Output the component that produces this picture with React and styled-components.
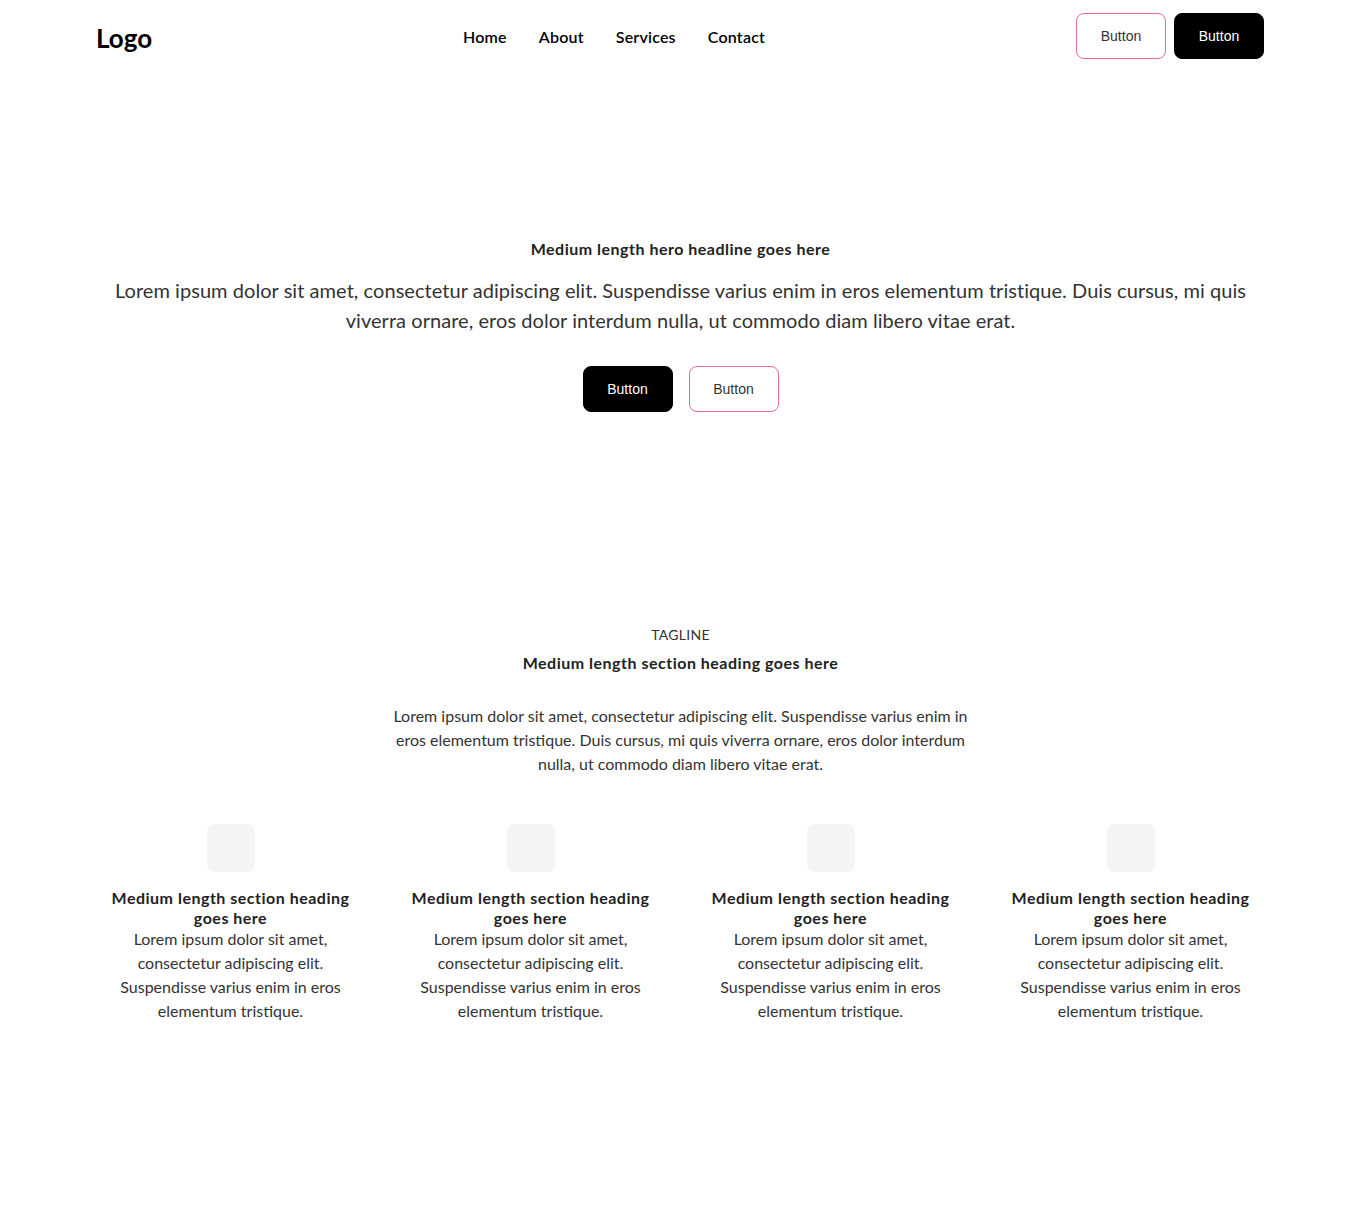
import React from "react";
import styled, { createGlobalStyle } from "styled-components";

const GlobalStyle = createGlobalStyle`
  * {
    box-sizing: border-box;
  }
  body {
    margin: 0;
    background: #fff;
    color: #222;
    font-family: Lato, "Noto Sans", sans-serif;
  }
`;

const features = [1, 2, 3, 4];

const App = () => {
  return (
    <>
      <GlobalStyle />
      <Header>
        <Logo>Logo</Logo>
        <Nav>
          <NavLink href="#">Home</NavLink>
          <NavLink href="#">About</NavLink>
          <NavLink href="#">Services</NavLink>
          <NavLink href="#">Contact</NavLink>
        </Nav>
        <ButtonGroup $gap={8}>
          <Button $variant="outline">Button</Button>
          <Button>Button</Button>
        </ButtonGroup>
      </Header>

      <Hero>
        <HeroTitle>Medium length hero headline goes here</HeroTitle>
        <HeroText>
          Lorem ipsum dolor sit amet, consectetur adipiscing elit. Suspendisse
          varius enim in eros elementum tristique. Duis cursus, mi quis viverra
          ornare, eros dolor interdum nulla, ut commodo diam libero vitae erat.
        </HeroText>
        <ButtonGroup $gap={16} $center>
          <Button>Button</Button>
          <Button $variant="outline">Button</Button>
        </ButtonGroup>
      </Hero>

      <Features>
        <Tagline>TAGLINE</Tagline>
        <SectionTitle>Medium length section heading goes here</SectionTitle>
        <SectionText>
          Lorem ipsum dolor sit amet, consectetur adipiscing elit. Suspendisse
          varius enim in eros elementum tristique. Duis cursus, mi quis viverra
          ornare, eros dolor interdum nulla, ut commodo diam libero vitae erat.
        </SectionText>
        <FeatureGrid>
          {features.map((n) => (
            <FeatureCard key={n}>
              <IconBox />
              <FeatureTitle>Medium length section heading goes here</FeatureTitle>
              <FeatureText>
                Lorem ipsum dolor sit amet, consectetur adipiscing elit.
                Suspendisse varius enim in eros elementum tristique.
              </FeatureText>
            </FeatureCard>
          ))}
        </FeatureGrid>
      </Features>
    </>
  );
};

const Header = styled.header`
  height: 72px;
  padding: 0 97px 0 96px;
  display: flex;
  align-items: center;
  justify-content: space-between;
`;

const Logo = styled.div`
  font-size: 26px;
  font-weight: 700;
  color: #000;
  padding-top: 3px;
`;

const Nav = styled.nav`
  display: flex;
  gap: 32px;
`;

const NavLink = styled.a`
  font-size: 16px;
  font-weight: 600;
  letter-spacing: 0.2px;
  color: #000;
  text-decoration: none;
`;

const ButtonGroup = styled.div`
  display: flex;
  gap: ${(p) => p.$gap}px;
  justify-content: ${(p) => (p.$center ? "center" : "flex-end")};
`;

const Button = styled.button`
  width: 90px;
  height: 46px;
  border-radius: 8px;
  font-family: "Liberation Sans", Arial, sans-serif;
  font-size: 14px;
  cursor: pointer;
  border: 1px solid ${(p) => (p.$variant === "outline" ? "#ec6a9c" : "#000")};
  background: ${(p) => (p.$variant === "outline" ? "#fff" : "#000")};
  color: ${(p) => (p.$variant === "outline" ? "#333" : "#fff")};
`;

const Hero = styled.section`
  padding: 165px 96px 0;
  text-align: center;
`;

const HeroTitle = styled.h1`
  margin: 0 0 14px;
  font-size: 16px;
  line-height: 24px;
  font-weight: 700;
  letter-spacing: 0.5px;
  color: #222;
`;

const HeroText = styled.p`
  margin: 0 0 31px;
  font-size: 20px;
  line-height: 30px;
  letter-spacing: 0.05px;
  color: #333;
`;

const Features = styled.section`
  max-width: 1200px;
  margin: 0 auto;
  padding: 212px 0 200px;
  text-align: center;
`;

const Tagline = styled.div`
  font-size: 14px;
  line-height: 21px;
  color: #333;
  letter-spacing: 0.3px;
`;

const SectionTitle = styled.h2`
  margin: 6px 0 29px;
  font-size: 16px;
  line-height: 24px;
  font-weight: 700;
  letter-spacing: 0.5px;
  color: #222;
`;

const SectionText = styled.p`
  max-width: 600px;
  margin: 0 auto 48px;
  font-size: 16px;
  line-height: 24px;
  color: #333;
`;

const FeatureGrid = styled.div`
  display: grid;
  grid-template-columns: repeat(4, 1fr);
`;

const FeatureCard = styled.div`
  display: flex;
  flex-direction: column;
  align-items: center;
  padding: 0 28px;
`;

const IconBox = styled.div`
  width: 48px;
  height: 48px;
  border-radius: 8px;
  background: #f3f4f6;
  margin-bottom: 16px;
`;

const FeatureTitle = styled.h3`
  margin: 0;
  font-size: 16px;
  line-height: 19.5px;
  font-weight: 700;
  letter-spacing: 0.5px;
  color: #222;
`;

const FeatureText = styled.p`
  margin: 0;
  font-size: 16px;
  line-height: 24px;
  color: #333;
`;

export default App;
